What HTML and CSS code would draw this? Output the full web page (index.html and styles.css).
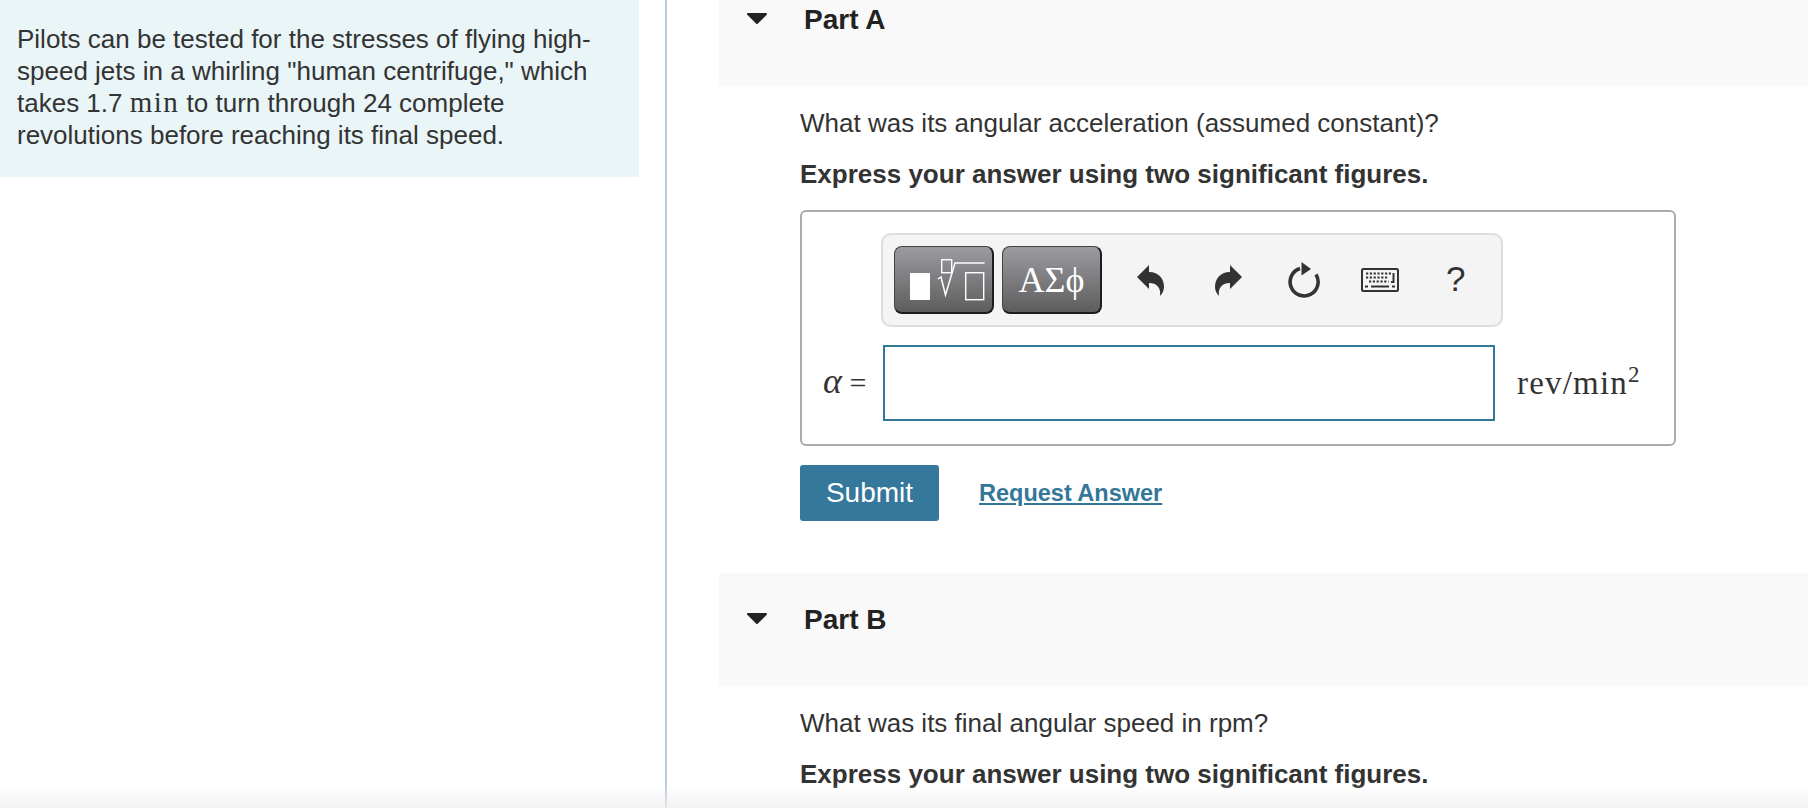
FILE: index.html
```html
<!DOCTYPE html>
<html lang="en">
<head>
  <meta charset="UTF-8">
  <meta name="viewport" content="width=device-width, initial-scale=1.0">
  <title>Human Centrifuge</title>
  <link rel="stylesheet" href="styles.css">
</head>
<body>
  <div class="page">
    <div class="left-col">
      <div class="intro">
        Pilots can be tested for the stresses of flying high-speed jets in a whirling "human centrifuge," which takes 1.7 <span class="math">min</span> to turn through 24 complete revolutions before reaching its final speed.
      </div>
    </div>

    <div class="right-col">
      <div class="part-head part-head-first">
        <svg class="arrow" width="22" height="13" viewBox="0 0 22 13"><path d="M2 2 H20 L11 11 Z" fill="#222" stroke="#222" stroke-width="2" stroke-linejoin="round"/></svg>
        <h3>Part A</h3>
      </div>
      <div class="part-body">
        <p class="question">What was its angular acceleration (assumed constant)?</p>
        <p class="instruction">Express your answer using two significant figures.</p>

        <div class="answer-box">
          <div class="toolbar">
            <button class="tool-btn" type="button" aria-label="Templates">
              <svg width="97" height="65" viewBox="1 1 97 65">
                <rect x="16" y="27" width="20" height="27" fill="#fff"/>
                <rect x="47.7" y="13.7" width="10" height="13" fill="none" stroke="#fff" stroke-width="1.4"/>
                <path d="M44 33 L47 31 L51.5 49 L61 17 H90.5" fill="none" stroke="#fff" stroke-width="1.5"/>
                <rect x="71.7" y="26.7" width="18" height="27" fill="none" stroke="#fff" stroke-width="1.4"/>
              </svg>
            </button>
            <button class="tool-btn tool-btn-symbols" type="button">ΑΣϕ</button>

            <span class="tool-icon tool-icon-undo">
              <svg width="27" height="31" viewBox="0 0 27 31"><path d="M0 12 L12 0 V7 C22 7 27 14 27 22 C27 26 25 29 23 31 C24 24 21 18 12 18 V24 Z" fill="#333"/></svg>
            </span>
            <span class="tool-icon tool-icon-redo">
              <svg width="27" height="31" viewBox="0 0 27 31"><path d="M27 12 L15 0 V7 C5 7 0 14 0 22 C0 26 2 29 4 31 C3 24 6 18 15 18 V24 Z" fill="#333"/></svg>
            </span>
            <span class="tool-icon tool-icon-reset">
              <svg width="34" height="37" viewBox="0 0 34 37">
                <path d="M13 6.5 A14 14 0 1 0 29 12.5" fill="none" stroke="#333" stroke-width="3.6"/>
                <path d="M14.5 0 L24 7 L14.5 13.5 Z" fill="#333"/>
              </svg>
            </span>
            <span class="tool-icon tool-icon-keys">
              <svg width="38" height="24" viewBox="0 0 38 24">
                <rect x="1" y="1" width="36" height="22" rx="1.5" fill="#f4f4f4" stroke="#333" stroke-width="2"/>
                <path d="M5 5.5 H31.5 M5 9.5 H27.5 M8 13.5 H27.5" fill="none" stroke="#333" stroke-width="2" stroke-dasharray="2.2 1.6"/>
                <path d="M32.5 5 V14 H30" fill="none" stroke="#333" stroke-width="2"/>
                <path d="M4 18.5 H7 M10 18.5 H28 M31 18.5 H34" fill="none" stroke="#333" stroke-width="2"/>
              </svg>
            </span>
            <span class="tool-help">?</span>
          </div>

          <div class="answer-row">
            <span class="answer-label"><i class="answer-symbol">α</i> =</span>
            <input class="answer-input" type="text" aria-label="alpha">
            <span class="answer-unit">rev/min<sup>2</sup></span>
          </div>
        </div>

        <div class="actions">
          <button class="submit-btn" type="button">Submit</button>
          <a class="request-link" href="#">Request Answer</a>
        </div>
      </div>

      <div class="part-head">
        <svg class="arrow" width="22" height="13" viewBox="0 0 22 13"><path d="M2 2 H20 L11 11 Z" fill="#222" stroke="#222" stroke-width="2" stroke-linejoin="round"/></svg>
        <h3>Part B</h3>
      </div>
      <div class="part-body">
        <p class="question">What was its final angular speed in rpm?</p>
        <p class="instruction">Express your answer using two significant figures.</p>
      </div>
    </div>
  </div>
  <div class="bottom-fade"></div>
</body>
</html>
```

FILE: styles.css
```css
html, body {
  height: 100%;
  margin: 0;
  overflow: hidden;
}
body {
  font-family: "Liberation Sans", Arial, sans-serif;
  font-size: 26px;
  color: #333;
  background-color: #fff;
}
.page {
  display: flex;
  height: 808px;
}
.left-col {
  width: 665px;
  flex-shrink: 0;
}
.intro {
  width: 639px;
  height: 177px;
  box-sizing: border-box;
  padding: 23px 40px 0 17px;
  background-color: #e9f5f7;
  line-height: 32px;
}
.math {
  font-family: "Liberation Serif", serif;
  font-size: 29px;
  letter-spacing: 1.5px;
  line-height: 0;
}
.right-col {
  flex: 1;
  padding-left: 52px;
  border-left: 2px solid #b9cbe0;
}
.part-head {
  display: flex;
  align-items: flex-start;
  height: 113px;
  box-sizing: border-box;
  padding: 32px 0 0 27px;
  background-color: #f9f9f9;
}
.part-head-first {
  height: 86px;
  padding-top: 5px;
}
.part-head h3 {
  margin: 0;
  font-size: 28px;
  line-height: 30px;
  color: #222;
}
.arrow {
  margin: 7px 36px 0 0;
}
.part-body {
  padding-left: 81px;
}
.question, .instruction {
  margin: 0;
  line-height: 30px;
}
.question {
  padding-top: 22px;
}
.instruction {
  padding-top: 21px;
  font-weight: bold;
}
.answer-box {
  width: 876px;
  height: 236px;
  box-sizing: border-box;
  margin-top: 21px;
  padding: 21px 0 0;
  border: 2px solid #aaa;
  border-radius: 6px;
}
.toolbar {
  display: flex;
  align-items: center;
  width: 622px;
  height: 94px;
  box-sizing: border-box;
  margin-left: 79px;
  padding-left: 11px;
  background-color: #f4f4f4;
  border: 2px solid #ddd;
  border-radius: 10px;
}
.tool-btn {
  display: flex;
  align-items: center;
  justify-content: center;
  width: 100px;
  height: 68px;
  box-sizing: border-box;
  padding: 0;
  margin-right: 8px;
  color: #fff;
  background: linear-gradient(#9c9ba1, #5d5d5d);
  border: 1px solid #444;
  border-bottom: 2px solid #1c1c1c;
  border-right: 2px solid #1c1c1c;
  border-radius: 8px;
}
.tool-btn-symbols {
  font-family: "Liberation Serif", serif;
  font-size: 36px;
}
.tool-icon {
  display: flex;
  align-items: center;
}
.tool-icon-undo {
  margin-left: 27px;
}
.tool-icon-redo {
  margin-left: 51px;
}
.tool-icon-reset {
  margin-left: 45px;
}
.tool-icon-keys {
  margin-left: 40px;
}
.tool-help {
  margin-left: 47px;
  font-size: 35px;
  margin-top: -2px;
}
.answer-row {
  display: flex;
  align-items: center;
  margin-top: 18px;
}
.answer-label {
  width: 81px;
  box-sizing: border-box;
  padding-left: 21px;
  font-family: "Liberation Serif", serif;
  font-size: 30px;
}
.answer-symbol {
  font-size: 36px;
  line-height: 0;
}
.answer-input {
  width: 612px;
  height: 76px;
  box-sizing: border-box;
  border: 2px solid #337799;
  border-radius: 0;
  background-color: #fff;
}
.answer-unit {
  margin-left: 22px;
  font-family: "Liberation Serif", serif;
  font-size: 33px;
  letter-spacing: 1.2px;
  line-height: 30px;
}
.answer-unit sup {
  font-size: 23px;
  line-height: 0;
}
.actions {
  display: flex;
  align-items: center;
  margin: 19px 0 52px;
}
.submit-btn {
  width: 139px;
  height: 56px;
  padding: 0;
  color: #fff;
  background-color: #36789b;
  border: none;
  border-radius: 3px;
  font-family: "Liberation Sans", Arial, sans-serif;
  font-size: 28px;
}
.request-link {
  margin-left: 40px;
  color: #337799;
  font-size: 23.5px;
  font-weight: bold;
}
.bottom-fade {
  position: fixed;
  left: 0;
  right: 0;
  bottom: 0;
  height: 24px;
  background: linear-gradient(rgba(240, 240, 240, 0), rgba(240, 240, 240, 0.8));
  pointer-events: none;
}
```
